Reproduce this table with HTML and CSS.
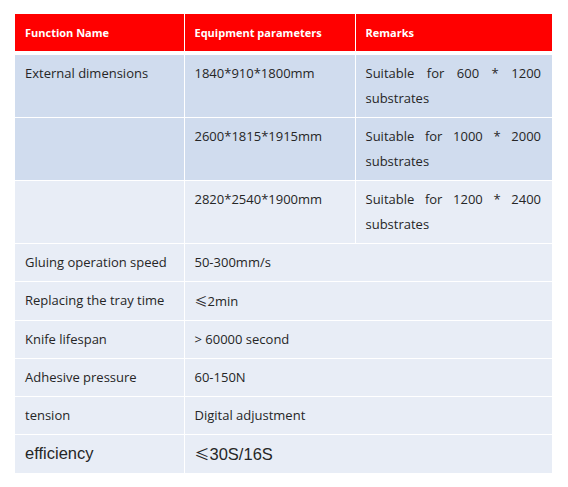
FILE: index.html
```html
<!DOCTYPE html>
<html>
<head>
<meta charset="utf-8">
<link rel="stylesheet" href="styles.css">
</head>
<body>
<table class="spec">
  <colgroup>
    <col class="c1"><col class="c2"><col class="c3">
  </colgroup>
  <thead>
    <tr class="head">
      <th>Function Name</th>
      <th>Equipment parameters</th>
      <th>Remarks</th>
    </tr>
  </thead>
  <tbody>
    <tr class="dark">
      <td>External dimensions</td>
      <td>1840*910*1800mm</td>
      <td class="just">Suitable for 600 * 1200 substrates</td>
    </tr>
    <tr class="dark">
      <td></td>
      <td>2600*1815*1915mm</td>
      <td class="just">Suitable for 1000 * 2000 substrates</td>
    </tr>
    <tr class="light">
      <td></td>
      <td>2820*2540*1900mm</td>
      <td class="just">Suitable for 1200 * 2400 substrates</td>
    </tr>
    <tr class="light">
      <td>Gluing operation speed</td>
      <td colspan="2">50-300mm/s</td>
    </tr>
    <tr class="light">
      <td>Replacing the tray time</td>
      <td colspan="2"><span class="cjk">≤</span>2min</td>
    </tr>
    <tr class="light">
      <td>Knife lifespan</td>
      <td colspan="2">&gt; 60000 second</td>
    </tr>
    <tr class="light">
      <td>Adhesive pressure</td>
      <td colspan="2">60-150N</td>
    </tr>
    <tr class="light">
      <td>tension</td>
      <td colspan="2">Digital adjustment</td>
    </tr>
    <tr class="light big">
      <td>efficiency</td>
      <td colspan="2"><span class="cjk">≤</span>30S/16S</td>
    </tr>
  </tbody>
</table>
</body>
</html>
```

FILE: styles.css
```css
html, body {
  margin: 0;
  padding: 0;
  background: #ffffff;
}
body {
  padding: 14px 0 0 15px;
}
.spec {
  border-collapse: collapse;
  table-layout: fixed;
  width: 537px;
  font-family: "Open Sans", "Noto Sans CJK SC", sans-serif;
  font-size: 13px;
  color: #262626;
}
.c1 { width: 169px; }
.c2 { width: 171px; }
.c3 { width: 197px; }
.spec th, .spec td {
  border: 1px solid #ffffff;
  padding: 6px 10px;
  line-height: 25px;
  text-align: left;
  vertical-align: top;
}
.spec tr:first-child th { border-top: 0; }
.spec tr th:first-child, .spec tr td:first-child { border-left: 0; }
.spec tr th:last-child, .spec tr td:last-child { border-right: 0; }
.spec tbody tr:last-child td { border-bottom: 0; }
.spec .head th {
  background: #ff0000;
  color: #ffffff;
  font-size: 11px;
  font-weight: 700;
  border-bottom: 4px solid #ffffff;
}
.dark td { background: #d0dcee; }
.light td { background: #e8edf6; }
.spec .just {
  text-align: justify;
  text-align-last: left;
  padding-right: 11px;
}
.cjk {
  font-family: "Noto Sans CJK SC", sans-serif;
}
.spec .big td {
  font-family: "Liberation Sans", Arial, sans-serif;
  font-size: 16.5px;
}
.spec .big .cjk {
  font-size: 15px;
}
```
